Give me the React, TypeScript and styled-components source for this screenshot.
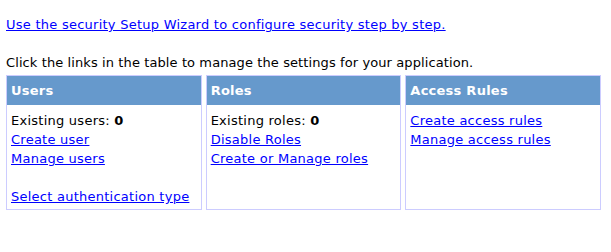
import styled, { createGlobalStyle } from "styled-components";

const GlobalStyle = createGlobalStyle`
  body {
    margin: 0;
    background: #fff;
    font-family: Verdana, "DejaVu Sans", sans-serif;
    font-size: 13px;
    letter-spacing: 0.25px;
    color: #000;
  }
`;

type Section = {
  title: string;
  count?: { label: string; value: number };
  links: string[];
  extra?: string;
};

const sections: Section[] = [
  {
    title: "Users",
    count: { label: "Existing users:", value: 0 },
    links: ["Create user", "Manage users"],
    extra: "Select authentication type",
  },
  {
    title: "Roles",
    count: { label: "Existing roles:", value: 0 },
    links: ["Disable Roles", "Create or Manage roles"],
  },
  {
    title: "Access Rules",
    links: ["Create access rules", "Manage access rules"],
  },
];

export default function App() {
  return (
    <Page>
      <GlobalStyle />
      <WizardLink href="#">Use the security Setup Wizard to configure security step by step.</WizardLink>
      <Intro>Click the links in the table to manage the settings for your application.</Intro>
      <Grid>
        {sections.map((s) => (
          <Panel key={s.title}>
            <Header>{s.title}</Header>
            <Body>
              {s.count && (
                <Line>
                  {s.count.label} <b>{s.count.value}</b>
                </Line>
              )}
              {s.links.map((l) => (
                <Line key={l}>
                  <Link href="#">{l}</Link>
                </Line>
              ))}
              {s.extra && (
                <Line $spaced>
                  <Link href="#">{s.extra}</Link>
                </Line>
              )}
            </Body>
          </Panel>
        ))}
      </Grid>
    </Page>
  );
}

const Page = styled.div`
  padding: 17px 10px 0 6px;
  width: 595px;
`;

const Link = styled.a`
  color: #0000ff;
  text-decoration: underline;
`;

const WizardLink = styled(Link)`
  display: block;
  line-height: 16px;
`;

const Intro = styled.p`
  margin: 22px 0 4px;
  line-height: 16px;
  letter-spacing: 0.1px;
`;

const Grid = styled.div`
  display: grid;
  grid-template-columns: repeat(3, 1fr);
  gap: 4px;
  height: 135px;
`;

const Panel = styled.div`
  display: flex;
  flex-direction: column;
  box-sizing: border-box;
  border: 1px solid #ccccff;
`;

const Header = styled.div`
  background: #6699cc;
  color: #fff;
  font-weight: bold;
  height: 29px;
  line-height: 29px;
  padding: 0 4px;
`;

const Body = styled.div`
  padding: 6px 4px 0;
`;

const Line = styled.div<{ $spaced?: boolean }>`
  line-height: 19px;
  margin-top: ${(p) => (p.$spaced ? "19px" : "0")};
`;
